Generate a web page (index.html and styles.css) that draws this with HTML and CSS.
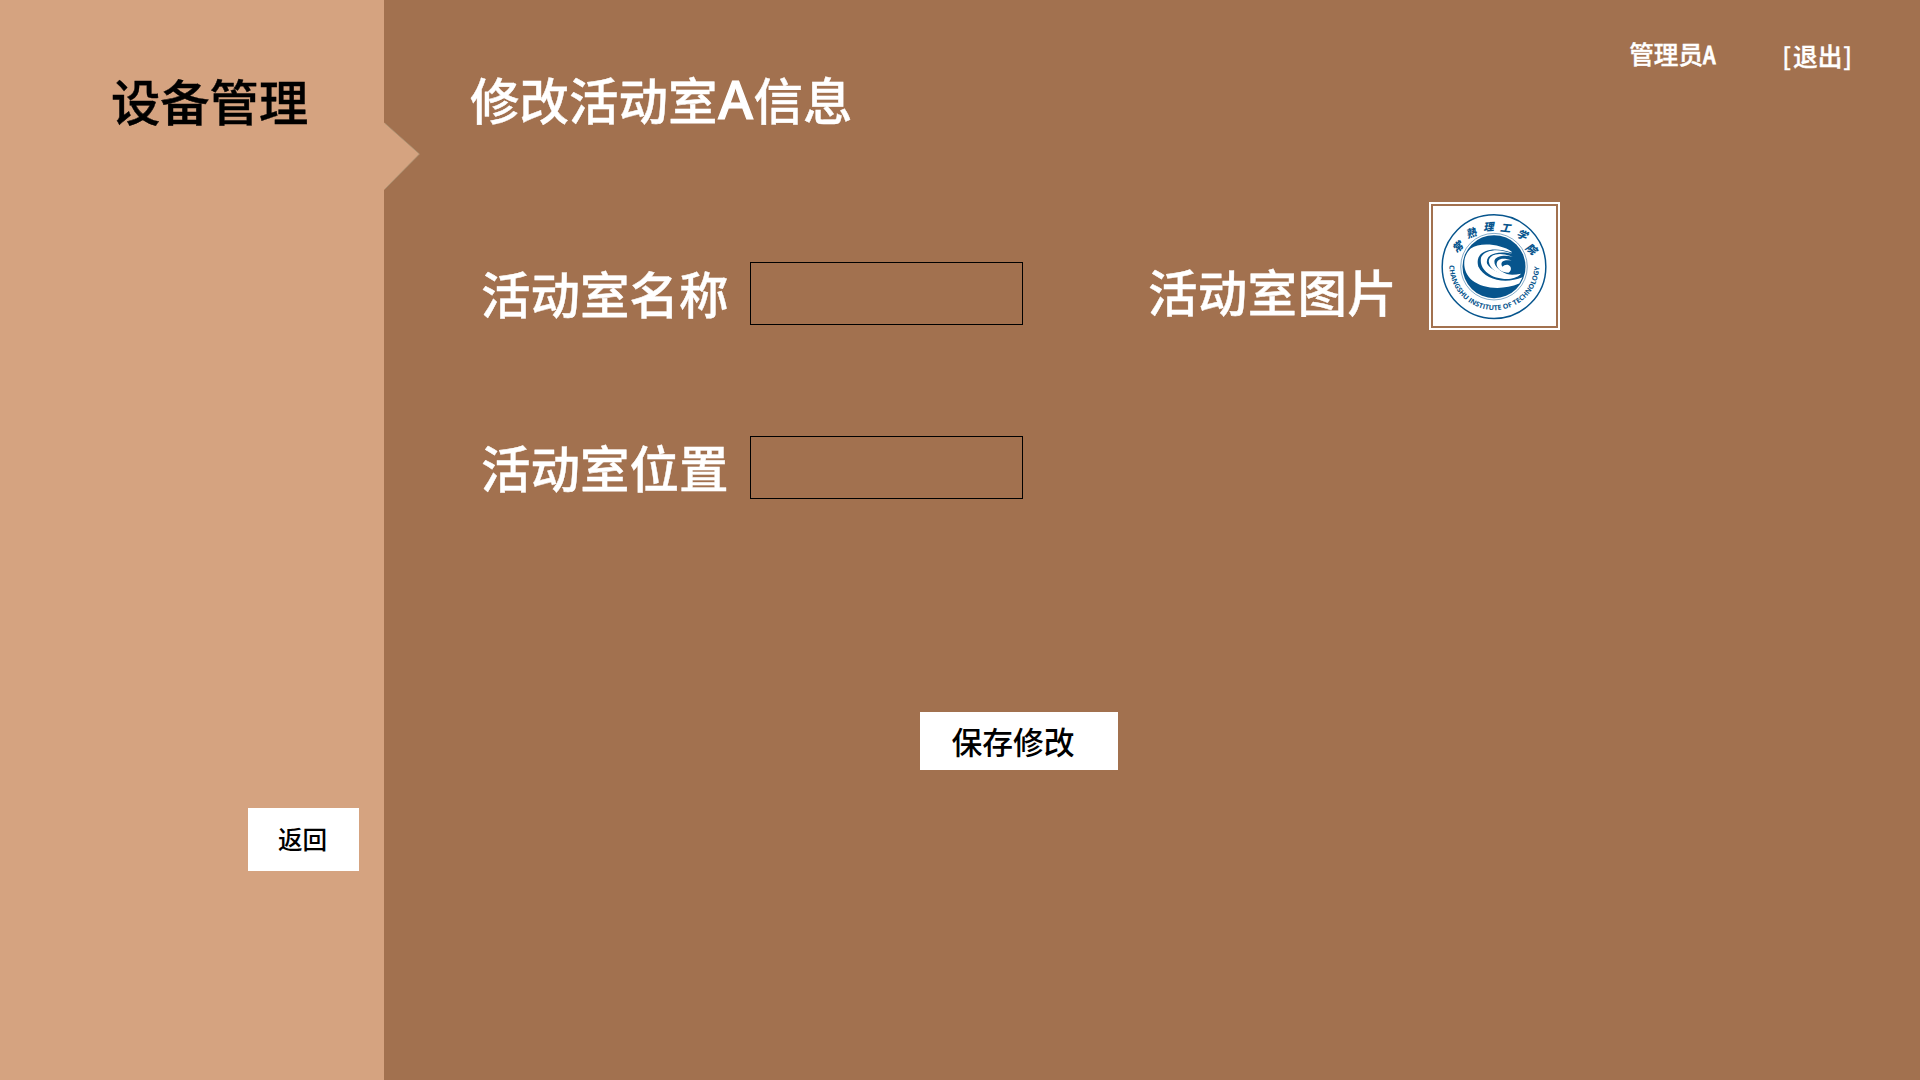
FILE: index.html
```html
<!DOCTYPE html>
<html lang="zh-CN">
<head>
<meta charset="utf-8">
<title>修改活动室A信息</title>
<link rel="stylesheet" href="styles.css">
</head>
<body>
<div class="app">
  <aside class="sidebar">
    <h1 class="sidebar-title">设备管理</h1>
    <svg class="pointer" viewBox="0 0 36 70"><path d="M0 2.5 35.5 34 0 70Z" fill="#d5a380"/><path d="M1 3.3 35.5 34 1 69" fill="none" stroke="#a59274" stroke-width=".7"/></svg>
    <button class="back">返回</button>
  </aside>
  <main class="main">
    <header class="header">
      <h2 class="page-title">修改活动室<span class="latin">A</span>信息</h2>
      <nav class="user"><span class="name">管理员<span class="letter">A</span></span><a class="logout"><span class="bracket">[</span>退出<span class="bracket-end">]</span></a></nav>
    </header>
    <form class="form">
      <label class="row row-name"><span class="label">活动室名称</span><input class="field" type="text"></label>
      <div class="row picture"><span class="label">活动室图片</span>
        <div class="frame">
          <svg class="logo" viewBox="37 33 375 361">
            <defs>
              <path id="ringBottom" d="M87 211A137 137 0 0 0 361 211"/>
            </defs>
            <g fill="none" stroke="#07558d">
              <circle cx="223" cy="215.5" r="158" stroke-width="4.5"/>
              <circle cx="223" cy="215.5" r="101.500" stroke-width="1.5"/>
            </g>
            <circle cx="223" cy="215.5" r="96" fill="#07558d"/>
            <g transform="translate(-840 -15)" fill="#fff">
              <path d="M1117 185C1085 162 1020 155 992 175C965 200 965 244 996 272C1030 299 1090 303 1140 282L1150 263C1095 285 1035 270 1015 230C1003 185 1050 165 1117 187Z"/>
              <path d="M1118 191C1080 173 1036 178 1024 201C1015 235 1050 270 1108 268C1125 266 1140 260 1145 252C1100 262 1055 245 1042 222C1035 195 1070 180 1118 191Z"/>
              <path d="M1120 201C1085 185 1048 190 1047 215C1050 240 1080 257 1108 255C1080 245 1060 227 1065 210C1074 196 1100 195 1120 201Z"/>
              <path d="M1117 212C1085 200 1070 210 1071 225C1074 240 1088 249 1107 249C1117 244 1117 230 1108 226C1101 223 1093 226 1089 231C1079 216 1093 207 1117 212Z"/>
            </g>
            <text class="ring-text"><textPath href="#ringBottom" textLength="426" lengthAdjust="spacingAndGlyphs">CHANGSHU INSTITUTE OF TECHNOLOGY</textPath></text>
            <g class="crest-text">
              <text transform="translate(112 156) rotate(-40)" y="12">常</text>
              <text transform="translate(153 113) rotate(-20)" y="12">熟</text>
              <text transform="translate(206 94) rotate(-4)" y="12">理</text>
              <text transform="translate(258 97) rotate(6)" y="12">工</text>
              <text transform="translate(309 118) rotate(22)" y="12">学</text>
              <text transform="translate(337 161) rotate(40)" y="12">院</text>
            </g>
          </svg>
        </div>
      </div>
      <label class="row"><span class="label">活动室位置</span><input class="field" type="text"></label>
    </form>
    <button class="save">保存修改</button>
  </main>
</div>
</body>
</html>
```
FILE: styles.css
```css
*{box-sizing:border-box}
body{margin:0;font-family:"Noto Sans CJK SC",sans-serif;font-weight:500}
.app{display:flex;width:1920px;height:1080px;background:#a2714f}
.sidebar{position:relative;width:384px;background:#d5a380;display:flex;flex-direction:column;align-items:flex-start;padding:65px 0 0 111px}
.sidebar-title,.page-title{margin:0;font-size:49.3px;line-height:70px;font-weight:500;white-space:nowrap;-webkit-text-stroke:.4px currentColor}
.page-title{font-size:49.5px}
.latin{display:inline-block;width:36px;height:70px;line-height:70px;font-family:"Noto Sans",sans-serif;font-size:53px;vertical-align:top;text-align:center;-webkit-text-stroke:1.2px currentColor}
.pointer{position:absolute;left:384px;top:120px;width:36px;height:70px}
button{border:0;background:#fff;color:#000;font-family:inherit;font-weight:500}
.back{width:111px;height:63px;margin:673px 0 0 137px;padding:0 2px 3px 0;font-size:24.6px}
.main{flex:1;display:flex;flex-direction:column;color:#fff}
.header{display:flex;justify-content:space-between;height:202px;padding:64px 68px 0 86px}
.user{display:flex;margin-top:-29px;font-size:24.6px;line-height:36px;-webkit-text-stroke:.4px currentColor}
.name{width:153px}
.letter{display:inline-block;transform:scaleX(.82);transform-origin:left;-webkit-text-stroke:1px currentColor}
.bracket{margin-right:2px}
.bracket-end{margin-left:1px}
.logout{margin-top:2px}
.form{display:grid;grid-template-columns:667px 520px;grid-template-rows:234px 63px;padding-left:97px}
.row{display:flex;align-items:flex-start}
.row-name{padding-top:60px}
.label{width:269px;margin-top:-4px;font-size:49.5px;line-height:70px;white-space:nowrap;-webkit-text-stroke:.4px currentColor}
.picture .label{width:281px;margin-top:54px;letter-spacing:.3px}
.field{width:273px;height:63px;border:1px solid #000;background:transparent;padding:0 12px;font:inherit;color:#fff}
.frame{width:131px;height:128px;padding:2px;border:2px solid #fff}
.logo{display:block;width:100%;height:100%;background:#fff}
.ring-text{fill:#07558d;font:700 21px "Open Sans",sans-serif}
.crest-text{fill:#07558d;font:italic 900 32px "Noto Sans CJK SC",sans-serif;text-anchor:middle}
.save{width:198px;height:58px;margin:213px 0 0 536px;padding:0 12px 2px 0;font-size:30.8px}
```
